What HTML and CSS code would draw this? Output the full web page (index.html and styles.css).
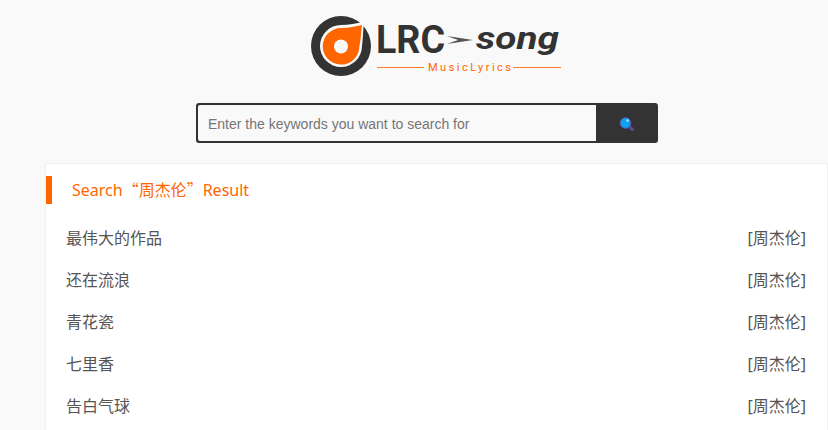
FILE: index.html
```html
<!DOCTYPE html>
<html lang="zh">
<head>
<meta charset="utf-8">
<title>LRC-song</title>
<link rel="stylesheet" href="styles.css">
</head>
<body>
<header class="logo-wrap">
<svg class="logo" width="252" height="64" viewBox="0 0 252 64" xmlns="http://www.w3.org/2000/svg">
  <circle cx="30" cy="32" r="30" fill="#333"/>
  <path d="M30 11 C38 11 45 9 53 8 C52 16 52 24 51 32 A21 21 0 1 1 30 11 Z" fill="#f9f9f9"/>
  <path d="M30 14 C38 14 45 12 51 11 C50 18 50 25 48.3 33 A18.3 18.3 0 1 1 30 14 Z" fill="#ff6600"/>
  <circle cx="30" cy="32.5" r="7" fill="#f9f9f9"/>
  <text class="logo-lrc" x="65" y="39" textLength="69" lengthAdjust="spacingAndGlyphs">LRC</text>
  <path d="M136 22 L162 26 L136 30 L147 26 Z" fill="#555"/>
  <text class="logo-song" x="165" y="35" textLength="83" lengthAdjust="spacingAndGlyphs">song</text>
  <rect class="logo-rule" x="66" y="53" width="47" height="1"/>
  <rect class="logo-rule" x="202" y="53" width="48" height="1"/>
  <text class="logo-sub" x="117" y="57" textLength="83">MusicLyrics</text>
</svg>
</header>
<form class="search">
  <input class="search-input" type="text" placeholder="Enter the keywords you want to search for">
  <button class="search-btn" type="button" aria-label="search">
    <svg width="18" height="18" viewBox="0 0 18 18" xmlns="http://www.w3.org/2000/svg">
      <path d="M11.5 11 L15.5 14.5" stroke="#5b4a9c" stroke-width="3" stroke-linecap="round"/>
      <circle cx="8.5" cy="8" r="5.4" fill="#0aa3f0" stroke="#5b4a9c" stroke-width="1"/>
      <rect x="9.5" y="4.5" width="2" height="2" fill="#e8f6ff"/>
    </svg>
  </button>
</form>
<main class="card">
  <h2 class="title">Search<span class="cjk">“周杰伦”</span>Result</h2>
  <ul class="list">
    <li class="row"><span>最伟大的作品</span><span>[周杰伦]</span></li>
    <li class="row"><span>还在流浪</span><span>[周杰伦]</span></li>
    <li class="row"><span>青花瓷</span><span>[周杰伦]</span></li>
    <li class="row"><span>七里香</span><span>[周杰伦]</span></li>
    <li class="row"><span>告白气球</span><span>[周杰伦]</span></li>
  </ul>
</main>
</body>
</html>
```
FILE: styles.css
```css
* { box-sizing: border-box; }
html, body { margin: 0; height: 430px; overflow: hidden; }
body {
  background: #f9f9f9;
  font-family: "Noto Sans", "Noto Sans CJK SC", sans-serif;
  color: #555;
}
.logo-wrap { padding: 14px 0 0 311px; height: 103px; }
.logo { display: block; }
.logo-lrc { font: 700 39px Roboto, sans-serif; fill: #333; }
.logo-song { font: italic 700 32px Roboto, sans-serif; fill: #333; }
.logo-sub { font: 400 11px Roboto, sans-serif; fill: #ff6600; }
.logo-rule { fill: #ff7a26; }
.search {
  display: flex;
  width: 462px;
  height: 40px;
  margin-left: 196px;
  border: 2px solid #333;
  border-radius: 3px;
  background: #333;
}
.search-input {
  flex: 1;
  min-width: 0;
  border: 0;
  outline: 0;
  padding: 2px 10px 0;
  background: #f9f9f9;
  font: 14px "Liberation Sans", sans-serif;
  border-radius: 2px 0 0 2px;
}
.search-input::placeholder { color: #757575; opacity: 1; }
.search-btn {
  width: 60px;
  border: 0;
  padding: 2px 0 0;
  background: #333;
  display: flex;
  align-items: center;
  justify-content: center;
}
.card {
  margin: 20px 0 0 45px;
  height: 267px;
  background: #fff;
  border: 1px solid #f0f0f0;
  border-bottom: 0;
  overflow: hidden;
}
.title {
  margin: 12px 0 0;
  height: 28px;
  line-height: 26px;
  padding-left: 20px;
  border-left: 6px solid #ff6600;
  font-size: 16px;
  font-weight: 400;
  color: #ff6600;
}
.cjk { font-family: "Noto Sans CJK SC", sans-serif; }
.list { list-style: none; margin: 11.5px 0 0; padding: 0 21px 0 20px; }
.row {
  display: flex;
  justify-content: space-between;
  align-items: center;
  height: 42px;
  font-size: 16px;
}
```
